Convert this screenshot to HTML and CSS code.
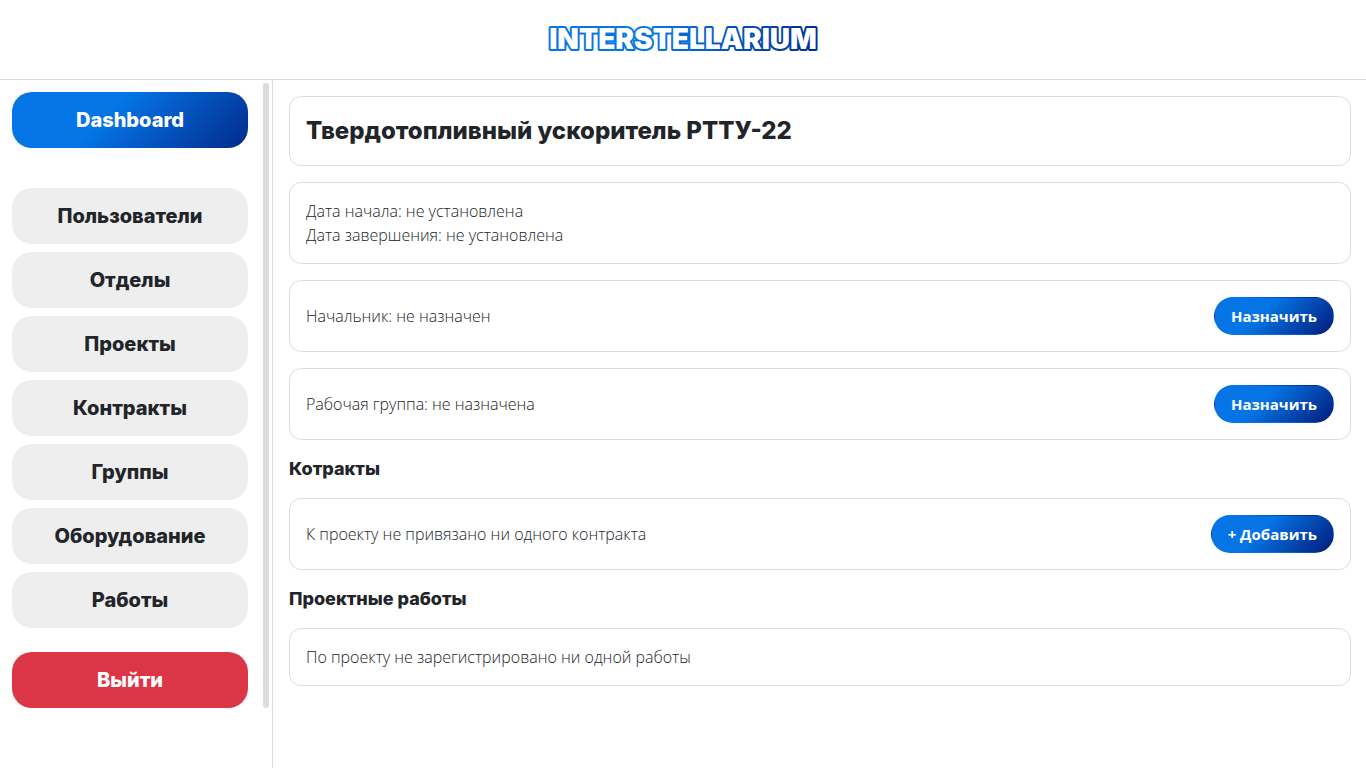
FILE: index.html
```html
<!DOCTYPE html>
<html lang="ru">
<head>
<meta charset="utf-8">
<meta name="viewport" content="width=device-width, initial-scale=1">
<title>Interstellarium</title>
<link rel="stylesheet" href="styles.css">
</head>
<body>
<header class="header">
  <a class="logo" href="#" aria-label="Interstellarium">
    <svg width="276" height="36" viewBox="0 0 276 36">
      <defs>
        <linearGradient id="logo-gradient" gradientUnits="userSpaceOnUse" x1="0" y1="0" x2="276" y2="0">
          <stop offset="0.4" stop-color="#0575e6"/>
          <stop offset="1" stop-color="#022a8c"/>
        </linearGradient>
      </defs>
      <text class="logo-text" x="138" y="27" text-anchor="middle">INTERSTELLARIUM</text>
    </svg>
  </a>
</header>
<div class="layout">
  <aside class="sidebar">
    <nav class="menu">
      <a class="menu-item menu-item-primary" href="#">Dashboard</a>
      <a class="menu-item" href="#">Пользователи</a>
      <a class="menu-item" href="#">Отделы</a>
      <a class="menu-item" href="#">Проекты</a>
      <a class="menu-item" href="#">Контракты</a>
      <a class="menu-item" href="#">Группы</a>
      <a class="menu-item" href="#">Оборудование</a>
      <a class="menu-item" href="#">Работы</a>
      <button class="menu-item menu-item-exit" type="button">Выйти</button>
    </nav>
    <div class="scroll-track"><div class="scroll-thumb"></div></div>
  </aside>
  <main class="content">
    <section class="card"><h1 class="title">Твердотопливный ускоритель РТТУ-22</h1></section>
    <section class="card">
      <p class="text">Дата начала: не установлена</p>
      <p class="text">Дата завершения: не установлена</p>
    </section>
    <section class="card card-row">
      <p class="text">Начальник: не назначен</p>
      <button class="button" type="button">Назначить</button>
    </section>
    <section class="card card-row">
      <p class="text">Рабочая группа: не назначена</p>
      <button class="button" type="button">Назначить</button>
    </section>
    <h2 class="subtitle">Котракты</h2>
    <section class="card card-row">
      <p class="text">К проекту не привязано ни одного контракта</p>
      <button class="button" type="button">+ Добавить</button>
    </section>
    <h2 class="subtitle">Проектные работы</h2>
    <section class="card"><p class="text">По проекту не зарегистрировано ни одной работы</p></section>
  </main>
</div>
</body>
</html>
```
FILE: styles.css
```css
* {
  box-sizing: border-box;
}

body {
  display: flex;
  flex-direction: column;
  min-height: 100vh;
  margin: 0;
  color: #212529;
  background: #fff;
  font-family: "Open Sans", "Noto Sans", sans-serif;
  font-size: 16px;
  font-weight: 300;
  line-height: 24px;
}

.header {
  display: flex;
  align-items: center;
  justify-content: center;
  height: 80px;
  border-bottom: 1px solid #dcdcdc;
}

.logo {
  display: flex;
}

.logo-text {
  font-family: Inter, sans-serif;
  font-size: 28px;
  font-weight: 900;
  fill: #fff;
  stroke: url(#logo-gradient);
  stroke-width: 4px;
  stroke-linejoin: round;
  paint-order: stroke;
}

.layout {
  display: flex;
  flex: 1;
}

.sidebar {
  display: flex;
  flex: none;
  width: 273px;
  padding-right: 3px;
  border-right: 1px solid #dcdcdc;
}

.menu {
  display: flex;
  flex: 1;
  flex-direction: column;
  gap: 8px;
  padding: 12px 15px 12px 12px;
}

.menu-item {
  display: block;
  padding: 12px;
  border: 0;
  border-radius: 20px;
  background: #eee;
  color: #212529;
  font-family: Inter, sans-serif;
  font-size: 20px;
  font-weight: 800;
  line-height: 32px;
  text-align: center;
  text-decoration: none;
}

.menu-item-primary {
  margin-bottom: 32px;
  background: linear-gradient(135deg, #0575e6 40%, #022a8c);
  color: #fff;
}

.menu-item-exit {
  margin-top: 16px;
  background: #dc3545;
  color: #fff;
}

.scroll-track {
  width: 6px;
  padding-top: 3px;
}

.scroll-thumb {
  height: 625px;
  border-radius: 3px;
  background: #dcdcdc;
}

.content {
  display: flex;
  flex: 1;
  flex-direction: column;
  gap: 16px;
  padding: 16px 15px 16px 16px;
}

.card {
  padding: 16px;
  border: 1px solid #dcdcdc;
  border-radius: 12px;
}

.card-row {
  display: flex;
  align-items: center;
  justify-content: space-between;
}

.title,
.subtitle,
.text {
  margin: 0;
}

.title,
.subtitle {
  font-family: Inter, sans-serif;
  font-weight: 800;
}

.title {
  font-size: 24px;
  line-height: 36px;
}

.subtitle {
  font-size: 18px;
  line-height: 26px;
}

.button {
  padding: 6px 16px;
  border: 1px solid transparent;
  border-radius: 19px;
  background: linear-gradient(135deg, #0575e6 40%, #021b79);
  color: #fff;
  font-family: "Open Sans", "Noto Sans", sans-serif;
  font-size: 15px;
  font-weight: 700;
  line-height: 24px;
}
```
